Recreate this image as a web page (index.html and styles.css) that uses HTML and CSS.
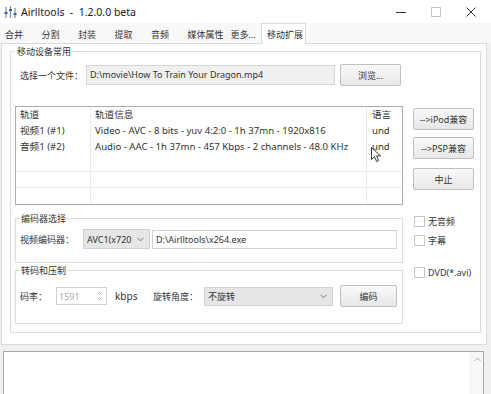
FILE: index.html
```html
<!DOCTYPE html>
<html lang="zh-CN">
<head>
  <meta charset="UTF-8" />
  <title>Airlltools - 1.2.0.0 beta</title>
  <link rel="stylesheet" href="styles.css">
</head>
<body>
  <!-- Titelleiste -->
  <div class="titlebar">
    <svg class="app-icon" viewBox="0 0 13 14" width="13" height="14">
      <path d="M2 2v11M6.5 1v12M11 3v10" stroke="#7a8aa8" stroke-width="1.2"/>
      <rect x="0.5" y="7" width="3" height="2" fill="#2f64b8"/>
      <rect x="5" y="4" width="3" height="2" fill="#2f64b8"/>
      <rect x="9.5" y="8" width="3" height="2" fill="#2f64b8"/>
    </svg>
    <span class="title">Airlltools &nbsp;- &nbsp;1.2.0.0 beta</span>
    <div class="controls">
      <span class="ctl"><svg width="10" height="10"><path d="M0 5.5h10" stroke="#333" stroke-width="1"/></svg></span>
      <span class="ctl"><svg width="10" height="10"><rect x="0.5" y="0.5" width="9" height="9" fill="none" stroke="#c4c4c4"/></svg></span>
      <span class="ctl"><svg width="10" height="10"><path d="M0.5 0.5l9 9M9.5 0.5l-9 9" stroke="#333" stroke-width="1"/></svg></span>
    </div>
  </div>

  <!-- Reiter -->
  <div class="tabs">
    <div class="tab">合并</div>
    <div class="tab">分割</div>
    <div class="tab">封装</div>
    <div class="tab">提取</div>
    <div class="tab">音频</div>
    <div class="tab wide">媒体属性</div>
    <div class="tab">更多...</div>
    <div class="tab active">移动扩展</div>
  </div>

  <div class="panel">
    <fieldset class="group main-group">
      <legend>移动设备常用</legend>

      <div class="file-row">
        <span class="file-lbl">选择一个文件：</span>
        <div class="textbox file-box">D:\movie\How To Train Your Dragon.mp4</div>
        <button class="btn browse">浏览...</button>
      </div>

      <div class="main-body">
        <div class="left-col">
          <div class="list">
            <div class="list-grid">
              <div class="c">轨道</div><div class="c">轨道信息</div><div class="c">语言</div>
              <div class="c">视频1 (#1)</div><div class="c">Video - AVC - 8 bits - yuv 4:2:0 - 1h 37mn - 1920x816</div><div class="c">und</div>
              <div class="c">音频1 (#2)</div><div class="c">Audio - AAC - 1h 37mn - 457 Kbps - 2 channels - 48.0 KHz</div><div class="c">und</div>
              <div class="c"></div><div class="c"></div><div class="c"></div>
              <div class="c line"></div><div class="c line"></div><div class="c line"></div>
              <div class="c line"></div><div class="c line"></div><div class="c line"></div>
            </div>
            <svg class="cursor" viewBox="0 0 11 16" width="11" height="16">
              <path d="M0.5 0.5V12.5L3.5 9.6L5.6 14.5L7.6 13.6L5.6 8.9H9.6Z" fill="#fff" stroke="#222" stroke-width="0.9" stroke-linejoin="round"/>
            </svg>
          </div>

          <fieldset class="group sub-group enc-group">
            <legend>编码器选择</legend>
            <div class="row">
              <span class="enc-lbl">视频编码器：</span>
              <div class="combo enc-combo">
                <span>AVC1(x720</span>
                <svg class="chev" width="7" height="5"><path d="M0.5 0.8l3 3 3-3" fill="none" stroke="#777"/></svg>
              </div>
              <div class="textbox path-box">D:\Airlltools\x264.exe</div>
            </div>
          </fieldset>

          <fieldset class="group sub-group trans-group">
            <legend>转码和压制</legend>
            <div class="row trans-row">
              <span class="rate-lbl">码率：</span>
              <div class="spin">
                <span>1591</span>
                <svg width="5" height="10"><path d="M0.5 3.5l2-2 2 2M0.5 6.5l2 2 2-2" fill="none" stroke="#999" stroke-width="0.8"/></svg>
              </div>
              <span class="unit">kbps</span>
              <span class="rot-lbl">旋转角度：</span>
              <div class="combo rot-combo">
                <span>不旋转</span>
                <svg class="chev" width="7" height="5"><path d="M0.5 0.8l3 3 3-3" fill="none" stroke="#777"/></svg>
              </div>
              <button class="btn encode">编码</button>
            </div>
          </fieldset>
        </div>

        <div class="right-col">
          <button class="btn side first">--&gt;iPod兼容</button>
          <button class="btn side second">--&gt;PSP兼容</button>
          <button class="btn side third">中止</button>
          <div class="check first"><span class="box"></span><span>无音频</span></div>
          <div class="check second"><span class="box"></span><span>字幕</span></div>
          <div class="check third"><span class="box"></span><span>DVD(*.avi)</span></div>
        </div>
      </div>
    </fieldset>
  </div>

  <!-- Ausgabe -->
  <div class="log">
    <div class="scrollbar">
      <svg width="7" height="5"><path d="M0.5 4l3-3 3 3" fill="none" stroke="#aaa"/></svg>
    </div>
  </div>
</body>
</html>
```

FILE: styles.css
```css
* {
  box-sizing: border-box;
}
body {
  margin: 0;
  width: 491px;
  height: 394px;
  overflow: hidden;
  background: #f0f0f0;
  font-family: "Noto Sans", "Noto Sans CJK SC", sans-serif;
  font-size: 9px;
  color: #333;
}

/* Titelleiste */
.titlebar {
  height: 23px;
  background: #fff;
  display: flex;
  align-items: center;
  padding-left: 4px;
}
.app-icon {
  display: block;
}
.title {
  margin-left: 4px;
  font-size: 10.5px;
  color: #222;
}
.controls {
  margin-left: auto;
  margin-right: 3px;
  display: flex;
}
.ctl {
  width: 35px;
  height: 23px;
  display: flex;
  align-items: center;
  justify-content: center;
}

/* Reiter */
.tabs {
  height: 20px;
  display: flex;
  align-items: flex-end;
  padding-left: 1px;
  background: #f8f8f8;
}
.tab {
  width: 36.5px;
  height: 18px;
  padding-left: 4px;
  line-height: 19px;
  white-space: nowrap;
}
.tab.wide {
  width: 43px;
}
.tab.active {
  position: relative;
  z-index: 1;
  width: 45px;
  height: 21px;
  margin-bottom: -1px;
  margin-left: -2px;
  padding-left: 5px;
  line-height: 21px;
  background: #fff;
  border: 1px solid #d9d9d9;
  border-bottom: none;
}

.panel {
  margin-left: 1px;
  width: 486px;
  height: 302px;
  background: #fff;
  border: 1px solid #dcdcdc;
}

/* Gruppen */
.group {
  margin: 0;
  min-width: 0;
  border: 1px solid #dcdcdc;
}
.group legend {
  padding: 0 2px;
  line-height: 15px;
  color: #333;
}
.main-group {
  margin: 0 5px 0 8px;
  padding: 5px 0 8px 4px;
}
.sub-group {
  width: 388px;
  padding-left: 4px;
  padding-right: 0;
}
.sub-group legend {
  padding: 0 1px;
}
.enc-group {
  margin-top: 6px;
  padding-top: 3px;
  padding-bottom: 13px;
}
.trans-group {
  margin-top: 0;
  padding-top: 7px;
  padding-bottom: 16px;
}

.file-row {
  display: flex;
  align-items: center;
  height: 22px;
  margin-left: 5px;
}
.file-lbl {
  width: 66px;
}
.textbox {
  padding-left: 3px;
  white-space: nowrap;
  overflow: hidden;
}
.file-box {
  width: 249px;
  height: 20px;
  line-height: 18px;
  background: #f0f0f0;
  border: 1px solid #d6d6d6;
}
.btn {
  padding: 0;
  font-family: inherit;
  font-size: 9px;
  color: #333;
  background: linear-gradient(#f9f9f9, #e7e7e7);
  border: 1px solid #bfbfbf;
  border-radius: 2px;
}
.browse {
  width: 61px;
  height: 22px;
  margin-left: 5px;
}

.main-body {
  display: flex;
  margin-top: 20px;
}
.left-col {
  width: 388px;
}

/* Spurliste */
.list {
  position: relative;
  height: 99px;
  background: #fff;
  border: 1px solid #acacac;
  font-size: 9.6px;
}
.list-grid {
  display: grid;
  grid-template-columns: 74px 276px 1fr;
  grid-template-rows: repeat(5, 16px) 1fr;
  height: 100%;
}
.c {
  line-height: 16px;
  padding-left: 4px;
  white-space: nowrap;
  overflow: hidden;
}
.c:nth-child(3n+2),
.c:nth-child(3n) {
  border-left: 1px solid #e9e9e9;
}
.c:nth-child(3n) {
  padding-left: 5px;
}
.c.line {
  border-top: 1px solid #ececec;
}
.cursor {
  position: absolute;
  left: 355px;
  top: 40px;
}

.row {
  display: flex;
  align-items: center;
  height: 20px;
}
.enc-lbl {
  width: 63px;
}
.combo {
  display: flex;
  align-items: center;
  justify-content: space-between;
  padding: 0 5px 0 3px;
  background: #e6e6e6;
  border: 1px solid #d0d0d0;
  white-space: nowrap;
}
.enc-combo {
  width: 67px;
  height: 20px;
}
.path-box {
  width: 245px;
  height: 19px;
  margin-left: 2px;
  line-height: 17px;
  background: #fff;
  border: 1px solid #d0d0d0;
}

.trans-row {
  height: 22px;
}
.rate-lbl {
  width: 36px;
}
.spin {
  width: 51px;
  height: 18px;
  display: flex;
  align-items: center;
  justify-content: space-between;
  padding: 0 4px 0 2px;
  color: #ababab;
  background: #fff;
  border: 1px solid #d0d0d0;
}
.unit {
  width: 38px;
  margin-left: 8px;
  font-size: 10px;
}
.rot-lbl {
  width: 51px;
}
.rot-combo {
  width: 129px;
  height: 19px;
}
.encode {
  width: 57px;
  height: 22px;
  margin-left: 7px;
}

/* rechte Spalte */
.right-col {
  width: 68px;
  margin-left: 10px;
  display: flex;
  flex-direction: column;
}
.side {
  width: 61px;
  height: 22px;
}
.side.first { margin-top: 2px; }
.side.second { margin-top: 7px; }
.side.third { margin-top: 9px; }
.check {
  display: flex;
  align-items: center;
  height: 16px;
  white-space: nowrap;
}
.check.first { margin-top: 23px; }
.check.second { margin-top: 3px; }
.check.third { margin-top: 16px; }
.box {
  width: 11px;
  height: 11px;
  margin-left: 1px;
  margin-right: 3px;
  background: #fff;
  border: 1px solid #c6c6c6;
}

/* Ausgabefeld */
.log {
  margin: 6px 0 0 3px;
  width: 481px;
  height: 60px;
  display: flex;
  justify-content: flex-end;
  background: #fff;
  border: 1px solid #a8a8a8;
}
.scrollbar {
  width: 13px;
  display: flex;
  justify-content: center;
  padding-top: 5px;
  background: #f7f7f7;
  border-left: 1px solid #eeeeee;
}
```
